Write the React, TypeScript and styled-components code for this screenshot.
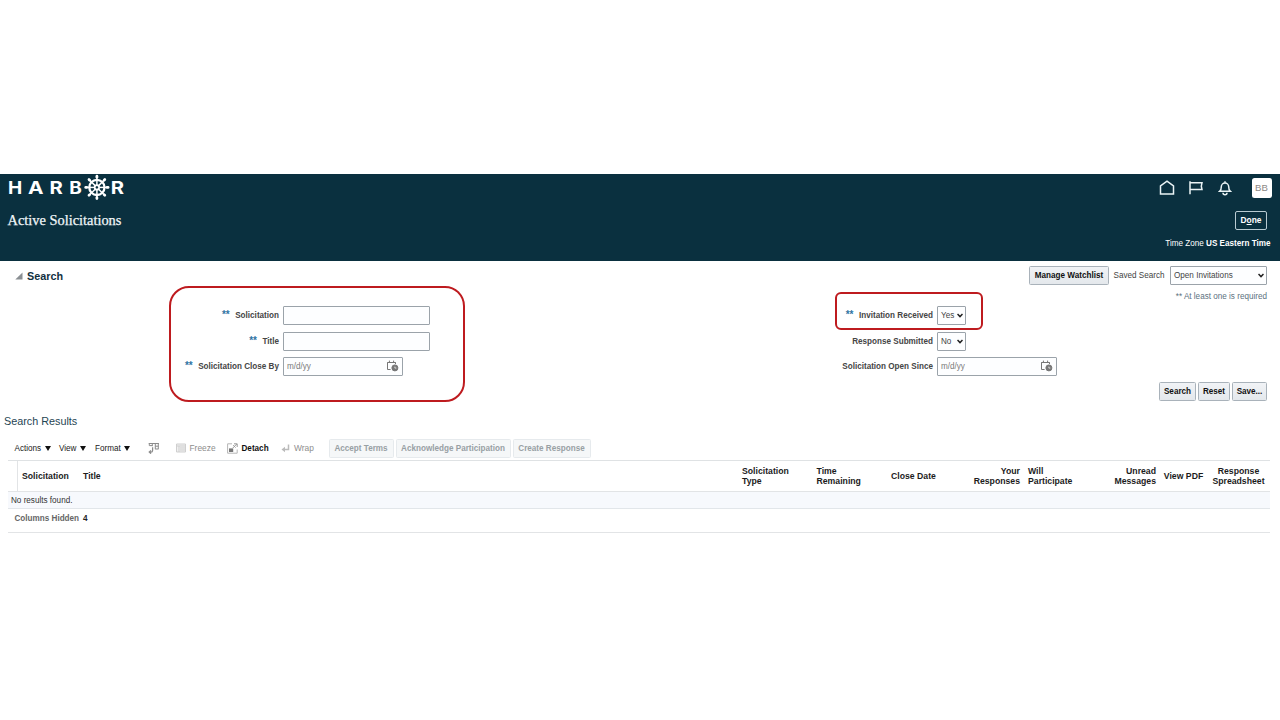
import React from 'react';
import styled, { createGlobalStyle } from 'styled-components';

const GlobalStyle = createGlobalStyle`
  * { box-sizing: border-box; }
  body {
    margin: 0;
    background: #fff;
    font-family: "Liberation Sans", Arial, sans-serif;
    font-size: 8.15px;
    line-height: 10px;
    color: #222;
  }
`;

const Page = styled.div`
  width: 1280px;
  height: 720px;
  padding-top: 174px;
  overflow: hidden;
  background: #fff;
`;

const Header = styled.header`
  height: 87px;
  background: #0a303f;
  color: #fff;
  display: flex;
  justify-content: space-between;
`;

const Brand = styled.div`
  display: flex;
  flex-direction: column;
  padding-left: 7px;
`;

const PageTitle = styled.h1`
  margin: 10px 0 0 0.5px;
  font: 400 14.4px/18px "Liberation Serif", serif;
  -webkit-text-stroke: 0.25px #f0f6f8;
  color: #f0f6f8;
`;

const HeaderSide = styled.div`
  display: flex;
  flex-direction: column;
  align-items: flex-end;
  padding-right: 8.5px;
`;

const IconBar = styled.div`
  display: flex;
  align-items: center;
  height: 27px;
`;

const IconSlot = styled.span<{ $gap: number }>`
  display: flex;
  margin-right: ${(p) => p.$gap}px;
`;

const Avatar = styled.div`
  width: 20px;
  height: 20px;
  border-radius: 2.5px;
  background: #fff;
  color: #8b8885;
  font-size: 9.6px;
  line-height: 20px;
  text-align: center;
`;

const DoneButton = styled.button`
  width: 32px;
  height: 19px;
  margin: 10px 4.5px 0 0;
  padding: 0;
  border: 1px solid #b9cbd2;
  border-radius: 2px;
  background: transparent;
  color: #fff;
  font: 700 8.4px/17px "Liberation Sans", sans-serif;
`;

const TimeZone = styled.div`
  margin: 8.5px 1px 0 0;
  line-height: 10px;
`;

const SearchHeader = styled.div`
  display: flex;
  align-items: center;
  height: 29px;
  padding: 0 13px 0 14.5px;
`;

const SectionTitle = styled.h2`
  margin: 0 auto 0 4.5px;
  font-size: 10.8px;
  line-height: 14px;
  font-weight: 700;
  color: #12303f;
`;

const SavedLabel = styled.span`
  width: 61px;
  padding-right: 1px;
  text-align: center;
  color: #444;
`;

const Button = styled.button<{ $width: number; $disabled?: boolean }>`
  flex: none;
  width: ${(p) => p.$width}px;
  height: 19px;
  padding: 0;
  white-space: nowrap;
  border: 1px solid ${(p) => (p.$disabled ? '#e6eaed' : '#a9b2ba')};
  border-radius: 1.5px;
  background: ${(p) => (p.$disabled ? '#f5f7f8' : 'linear-gradient(#f1f3f6, #e4e8ec)')};
  color: ${(p) => (p.$disabled ? '#98a0a4' : '#111')};
  font: 700 8.15px/17px "Liberation Sans", sans-serif;
`;

const RequiredNote = styled.div`
  height: 13px;
  padding: 2px 13px 0 0;
  text-align: right;
  color: #5c7180;
`;

const Fields = styled.div`
  display: flex;
  height: 74px;
  margin-top: 2.5px;
`;

const FieldColumn = styled.div<{ $width: number }>`
  position: relative;
  width: ${(p) => p.$width}px;
  display: flex;
  flex-direction: column;
  gap: 6.7px;
`;

const FieldRow = styled.label<{ $label: number }>`
  display: grid;
  grid-template-columns: ${(p) => p.$label}px auto;
  column-gap: 4px;
  align-items: center;
  justify-content: start;
  height: 19px;

  &:nth-child(2) { margin: 0.4px 0 -0.4px; }
`;

const FieldLabel = styled.span`
  padding-top: 1px;
  text-align: right;
  font-weight: 700;
  color: #454545;
  white-space: nowrap;
`;

const Stars = styled.span`
  margin-right: 5.5px;
  font-size: 10px;
  line-height: 8px;
  color: #2f74a3;
`;

const Box = styled.span<{ $width: number }>`
  display: flex;
  align-items: center;
  width: ${(p) => p.$width}px;
  height: 19px;
  border: 1px solid #9ba3aa;
  border-radius: 1px;
  background: #fdfeff;
  padding-right: 2px;
`;

const TextInput = styled.input`
  flex: 1;
  min-width: 0;
  height: 17px;
  padding: 0 3px;
  border: 0;
  outline: 0;
  background: transparent;
  font: 400 8.15px/17px "Liberation Sans", sans-serif;
  &::placeholder { color: #7a7a7a; opacity: 1; }
`;

const SelectValue = styled.span`
  flex: 1;
  padding: 1px 0 0 3px;
  color: #444;
`;

const Highlight = styled.div<{ $x: number; $y: number; $w: number; $h: number; $r: number }>`
  position: absolute;
  left: ${(p) => p.$x}px;
  top: ${(p) => p.$y}px;
  width: ${(p) => p.$w}px;
  height: ${(p) => p.$h}px;
  border: 2px solid #be1b1f;
  border-radius: ${(p) => p.$r}px;
  pointer-events: none;
`;

const ButtonRow = styled.div`
  display: flex;
  justify-content: flex-end;
  gap: 2px;
  padding: 2.5px 13px 0 0;
`;

const ResultsTitle = styled.h2`
  margin: 13px 0 0 4px;
  font-size: 10.8px;
  line-height: 14px;
  font-weight: 400;
  color: #1f4553;
`;

const Toolbar = styled.div`
  display: flex;
  align-items: center;
  height: 20px;
  margin-top: 10px;
  padding-left: 14.5px;
`;

const MenuItem = styled.span<{ $width: number }>`
  display: flex;
  align-items: center;
  gap: 3.5px;
  width: ${(p) => p.$width}px;
  padding-top: 1px;
  color: #222;
`;

const Tool = styled.span<{ $width: number; $active?: boolean }>`
  display: flex;
  align-items: center;
  gap: 4px;
  width: ${(p) => p.$width}px;
  padding-top: ${(p) => (p.$active ? 1 : 0)}px;
  font-size: ${(p) => (p.$active ? 8.15 : 8.4)}px;
  font-weight: ${(p) => (p.$active ? 700 : 400)};
  color: ${(p) => (p.$active ? '#111' : '#8e8e8e')};
`;

const ToolButtons = styled.div`
  display: flex;
  gap: 2px;
`;

const Table = styled.div`
  width: 1262px;
  margin: 2px 0 0 8px;
  border-top: 1px solid #dfe2e4;
`;

const HeadRow = styled.div`
  display: grid;
  grid-template-columns: 10px 61px 659px 74.5px 74.5px 63px 74px 73.5px 62.5px 47px 63px;
  height: 31px;
  border-bottom: 1px solid #e2e4e6;
`;

const HeadCell = styled.div<{ $align?: 'left' | 'right' | 'center' }>`
  display: flex;
  align-items: center;
  justify-content: ${(p) => (p.$align === 'right' ? 'flex-end' : p.$align === 'center' ? 'center' : 'flex-start')};
  padding: 0 ${(p) => (p.$align === 'center' ? 0 : 4)}px;
  text-align: ${(p) => p.$align ?? 'left'};
  font-weight: 700;
  font-size: 8.7px;
  white-space: nowrap;
  color: #1c1c1c;
`;

const Gutter = styled.div`
  border-right: 1px solid #e2e4e6;
`;

const EmptyRow = styled.div`
  height: 17px;
  padding-left: 3px;
  line-height: 17px;
  background: #f7f9fd;
  border-bottom: 1px solid #e2e6ea;
  color: #333;
`;

const FooterRow = styled.div`
  display: flex;
  gap: 4px;
  height: 24px;
  padding: 0 0 0 6.5px;
  line-height: 19px;
  font-weight: 700;
  color: #666;
  border-bottom: 1px solid #e2e4e6;
`;

const Strong = styled.b`
  color: #222;
`;

const LETTERS: [string, number, number][] = [
  ['H', 7.9, 1.1],
  ['A', 27.9, 1.2],
  ['R', 49.6, 1.17],
  ['B', 69.3, 1.1],
  ['R', 110.7, 1.17],
];

const Logo = () => {
  const spokes = [0, 45, 90, 135, 180, 225, 270, 315];
  return (
    <svg width="120" height="27" viewBox="7 0 120 27">
      <g fill="#fff" fontFamily="Inter, sans-serif" fontWeight="700" fontSize="17.3">
        {LETTERS.map(([letter, x, stretch]) => (
          <text key={x} transform={`translate(${x} 19.6) scale(${stretch} 1)`}>{letter}</text>
        ))}
      </g>
      <g transform="translate(96.9 13.4)" fill="none" stroke="#fff">
        <circle r="7.6" strokeWidth="2.3" />
        <circle r="2.2" strokeWidth="1.8" />
        {spokes.map((a) => (
          <g key={a} transform={`rotate(${a})`}>
            <path d="M0-2.5V-11" strokeWidth="1.5" />
            <path d="M0-10.2V-11.2" strokeWidth="2.7" strokeLinecap="round" />
          </g>
        ))}
      </g>
    </svg>
  );
};

const HomeIcon = () => (
  <svg width="16" height="16" viewBox="0 0 16 16" fill="none" stroke="#eaf3f5" strokeWidth="1.5">
    <path d="M1.5 14V6L8 1.2 14.5 6v8z" />
  </svg>
);

const FlagIcon = () => (
  <svg width="16" height="16" viewBox="0 0 16 16" fill="none" stroke="#eaf3f5" strokeWidth="1.5">
    <path d="M2 1.2v13M2 2.8h12l-.7 3.4.7 3.4H2" />
  </svg>
);

const BellIcon = () => (
  <svg width="14" height="16" viewBox="0 0 14 16" fill="none" stroke="#eaf3f5" strokeWidth="1.5">
    <path d="M1.8 11.2c1.2-1 1.5-2 1.5-4.4a3.7 3.7 0 0 1 7.4 0c0 2.4.3 3.4 1.5 4.4zM7 1.2v1.6M5 12.8a2 2 0 0 0 4 0" />
  </svg>
);

const Chevron = () => (
  <svg width="6" height="5" viewBox="0 0 6 5" fill="none" stroke="#222" strokeWidth="1.5">
    <path d="M.5 1 3 3.6 5.5 1" />
  </svg>
);

const DateIcon = () => (
  <svg width="14" height="13" viewBox="0 0 14 13" fill="none" stroke="#777" strokeWidth="1">
    <path d="M4.6 9.5H1.5V2.5h8V4M3.4.6v2.4M7.6.6v2.4M1.5 2.5h8" />
    <circle cx="8.9" cy="7.9" r="3" fill="#777" />
    <path d="M8.9 6.6v1.5h1.5" stroke="#fff" strokeWidth=".7" />
  </svg>
);

const Caret = () => (
  <svg width="6" height="5" viewBox="0 0 6 5">
    <path d="M0 0h6L3 5z" fill="#111" />
  </svg>
);

const Disclosure = () => (
  <svg width="8" height="8" viewBox="0 0 8 8">
    <path d="M7.5.5v7H.3z" fill="#8a8f93" />
  </svg>
);

const QueryIcon = () => (
  <svg width="12" height="12" viewBox="0 0 12 12" fill="none" stroke="#8c8c8c" strokeWidth="1">
    <path d="M.8 1.5h10M1.3 1v2.6M4.3 1v3.2M7.3 1v6.2M10.3 1v6.2M7.3 4.2h3M7.3 7h3M1.3 3.6h3" />
    <path d="M4.6 5.2v3.3a1.6 1.6 0 0 1-1.6 1.6H1.4M3 8.4 1.2 10.1 3 11.7" strokeWidth="1.2" />
  </svg>
);

const FreezeIcon = () => (
  <svg width="10" height="10" viewBox="0 0 10 10" fill="none" stroke="#cfcfcf" strokeWidth="1">
    <path fill="#f0f0f0" d="M.5 1h9v8h-9z" />
    <path d="M.5 3h9M3 3v6M4 5h5M4 7h5" />
  </svg>
);

const DetachIcon = () => (
  <svg width="11" height="11" viewBox="0 0 11 11" fill="none" stroke="#999" strokeWidth="1">
    <path d="M5 .8H.6v9.4h9.6V6.5" stroke="#b5b5b5" />
    <path d="M2 5.4h4.2v3.6H2z" fill="#777" stroke="none" />
    <path d="M5.8 5 9.8 1M7 .8h3.2V4M6.2 2.2l2.4 2.4" />
  </svg>
);

const WrapIcon = () => (
  <svg width="9" height="9" viewBox="0 0 9 9" fill="none" stroke="#bbb" strokeWidth="1.5">
    <path d="M7.5.5v5H2.5" />
    <path d="M4 2.8v5.4L.5 5.5z" fill="#bbb" stroke="none" />
  </svg>
);

const Select = ({ width, value }: { width: number; value: string }) => (
  <Box $width={width}>
    <SelectValue>{value}</SelectValue>
    <Chevron />
  </Box>
);

const DateField = () => (
  <Box $width={120}>
    <TextInput placeholder="m/d/yy" />
    <DateIcon />
  </Box>
);

const Label = ({ starred, children }: { starred?: boolean; children: string }) => (
  <FieldLabel>
    {starred && <Stars>**</Stars>}
    {children}
  </FieldLabel>
);

export default function App() {
  return (
    <Page>
      <GlobalStyle />
      <Header>
        <Brand>
          <Logo />
          <PageTitle>Active Solicitations</PageTitle>
        </Brand>
        <HeaderSide>
          <IconBar>
            <IconSlot $gap={13}><HomeIcon /></IconSlot>
            <IconSlot $gap={14}><FlagIcon /></IconSlot>
            <IconSlot $gap={20}><BellIcon /></IconSlot>
            <Avatar>BB</Avatar>
          </IconBar>
          <DoneButton>D<u>o</u>ne</DoneButton>
          <TimeZone>Time Zone <b>US Eastern Time</b></TimeZone>
        </HeaderSide>
      </Header>

      <SearchHeader>
        <Disclosure />
        <SectionTitle>Search</SectionTitle>
        <Button $width={80}>Manage Watchlist</Button>
        <SavedLabel>Saved Search</SavedLabel>
        <Select width={97} value="Open Invitations" />
      </SearchHeader>
      <RequiredNote>** At least one is required</RequiredNote>

      <Fields>
        <FieldColumn $width={640}>
          <FieldRow $label={279}>
            <Label starred>Solicitation</Label>
            <Box $width={147}><TextInput /></Box>
          </FieldRow>
          <FieldRow $label={279}>
            <Label starred>Title</Label>
            <Box $width={147}><TextInput /></Box>
          </FieldRow>
          <FieldRow $label={279}>
            <Label starred>Solicitation Close By</Label>
            <DateField />
          </FieldRow>
          <Highlight $x={169} $y={-19.5} $w={296} $h={116} $r={20} />
        </FieldColumn>
        <FieldColumn $width={640}>
          <FieldRow $label={293}>
            <Label starred>Invitation Received</Label>
            <Select width={29} value="Yes" />
          </FieldRow>
          <FieldRow $label={293}>
            <Label>Response Submitted</Label>
            <Select width={29} value="No" />
          </FieldRow>
          <FieldRow $label={293}>
            <Label>Solicitation Open Since</Label>
            <DateField />
          </FieldRow>
          <Highlight $x={195} $y={-13.5} $w={148} $h={38} $r={6} />
        </FieldColumn>
      </Fields>

      <ButtonRow>
        <Button $width={37}>Search</Button>
        <Button $width={32}>Reset</Button>
        <Button $width={35}>Save...</Button>
      </ButtonRow>

      <ResultsTitle>Search Results</ResultsTitle>
      <Toolbar>
        <MenuItem $width={44.5}>Actions <Caret /></MenuItem>
        <MenuItem $width={36}>View <Caret /></MenuItem>
        <MenuItem $width={53}>Format <Caret /></MenuItem>
        <Tool $width={27.5}><QueryIcon /></Tool>
        <Tool $width={51}><FreezeIcon />Freeze</Tool>
        <Tool $width={54.5} $active><DetachIcon />Detach</Tool>
        <Tool $width={47.5}><WrapIcon />Wrap</Tool>
        <ToolButtons>
          <Button $disabled $width={65}>Accept Terms</Button>
          <Button $disabled $width={115}>Acknowledge Participation</Button>
          <Button $disabled $width={78}>Create Response</Button>
        </ToolButtons>
      </Toolbar>

      <Table>
        <HeadRow>
          <Gutter />
          <HeadCell>Solicitation</HeadCell>
          <HeadCell>Title</HeadCell>
          <HeadCell>Solicitation<br />Type</HeadCell>
          <HeadCell>Time<br />Remaining</HeadCell>
          <HeadCell>Close Date</HeadCell>
          <HeadCell $align="right">Your<br />Responses</HeadCell>
          <HeadCell>Will<br />Participate</HeadCell>
          <HeadCell $align="right">Unread<br />Messages</HeadCell>
          <HeadCell $align="center">View PDF</HeadCell>
          <HeadCell $align="center">Response<br />Spreadsheet</HeadCell>
        </HeadRow>
        <EmptyRow>No results found.</EmptyRow>
        <FooterRow>Columns Hidden <Strong>4</Strong></FooterRow>
      </Table>
    </Page>
  );
}
